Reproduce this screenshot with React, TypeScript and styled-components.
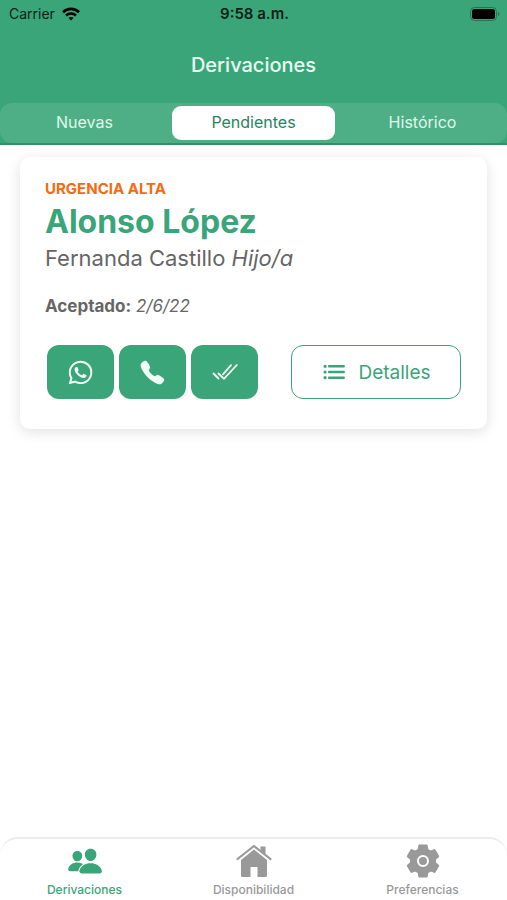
import React from 'react';
import styled, { createGlobalStyle } from 'styled-components';
import { IoLogoWhatsapp, IoCall, IoPeople, IoList } from 'react-icons/io5';

const green = '#3aa578';

const GlobalStyle = createGlobalStyle`
  * { box-sizing: border-box; }
  body { margin: 0; background: #fff; font-family: Inter, "Liberation Sans", sans-serif; }
  button { font: inherit; border: 0; margin: 0; cursor: pointer; }
`;

const Screen = styled.div`
  display: flex;
  flex-direction: column;
  min-height: 100vh;
`;

const Header = styled.header`
  background: ${green};
  border-bottom: 2px solid #359069;
`;

const StatusBar = styled.div`
  display: grid;
  grid-template-columns: 1fr auto 1fr;
  align-items: center;
  height: 27px;
  padding: 0 7px 0 9px;
  font-size: 14px;
  color: #0b1f17;
`;

const Carrier = styled.div`
  display: flex;
  align-items: center;
  gap: 7px;
`;

const Clock = styled.time`
  font-weight: 600;
  font-size: 15px;
`;

const Battery = styled.svg`
  justify-self: end;
`;

const Title = styled.h1`
  margin: 0;
  padding: 24px 0;
  font-size: 20px;
  line-height: 28px;
  font-weight: 500;
  text-align: center;
  color: #eafff4;
`;

const Tabs = styled.div`
  display: grid;
  grid-template-columns: repeat(3, 1fr);
  padding: 3px 0;
  border-radius: 12px;
  background: #4eaf86;
`;

const Tab = styled.button<{ $active?: boolean }>`
  height: 34px;
  margin: 0 3px;
  padding: 0 0 2px;
  border-radius: 9px;
  background: ${p => (p.$active ? '#fff' : 'transparent')};
  color: ${p => (p.$active ? '#26845d' : '#e0f7ec')};
  font-size: 16px;
`;

const Main = styled.main`
  flex: 1;
  padding: 12px 20px;
`;

const Card = styled.article`
  padding: 24px 25px 30px;
  border-radius: 10px;
  background: #fff;
  box-shadow: 0 3px 14px rgba(0, 0, 0, 0.12);
  color: #666;
`;

const Urgency = styled.p`
  margin: 0;
  font-size: 15px;
  line-height: 16px;
  font-weight: 700;
  color: #f9690e;
`;

const Name = styled.h2`
  margin: 4px 0 0;
  font-size: 32px;
  line-height: 42px;
  font-weight: 700;
  color: ${green};
`;

const Relative = styled.p`
  margin: 0;
  font-size: 22px;
  line-height: 30px;
`;

const Accepted = styled.p`
  margin: 22px 0 28px;
  font-size: 17px;
  line-height: 22px;
`;

const Actions = styled.div`
  display: flex;
  align-items: center;
  justify-content: space-between;
  padding: 0 1px 0 2px;
`;

const Quick = styled.div`
  display: flex;
  gap: 5px;
`;

const IconButton = styled.button`
  display: grid;
  place-items: center;
  width: 67px;
  height: 54px;
  padding: 0;
  border-radius: 12px;
  background: ${green};
  color: #f0fff8;
`;

const DetailsButton = styled.button`
  display: flex;
  align-items: center;
  justify-content: center;
  gap: 11px;
  width: 170px;
  height: 54px;
  && { border: 1px solid ${green}; }
  border-radius: 12px;
  background: #fff;
  color: ${green};
  font-size: 19px;
`;

const BottomNav = styled.nav`
  display: grid;
  grid-template-columns: repeat(3, 1fr);
  height: 63px;
  border-top: 2px solid #ececec;
  border-radius: 18px 18px 0 0;
`;

const NavLink = styled.a<{ $active?: boolean }>`
  display: flex;
  flex-direction: column;
  align-items: center;
  gap: 3px;
  padding-top: 4px;
  color: ${p => (p.$active ? green : '#999')};
  font-size: 12px;
  font-weight: 500;
  line-height: 16px;
  text-decoration: none;
`;

const DoubleCheck = () => (
  <svg width="26" height="18" viewBox="0 0 26 18" fill="none" stroke="currentColor" strokeWidth="1.8" strokeLinecap="round" aria-hidden="true">
    <path d="M1.5 10.5 6.5 15.5M6.5 10.5 12 15.8 24.8 2M11 11.3 19 2.2" />
  </svg>
);

const House = () => (
  <svg width="36" height="36" viewBox="0 0 36 36" fill="currentColor" aria-hidden="true">
    <path d="M1.5 16 18 3 34.500 16" fill="none" stroke="currentColor" strokeWidth="2.2" strokeLinecap="round" strokeLinejoin="round" />
    <path d="M24.5 3.5h5v9l-5-3.8z" />
    <path d="M18 6.500 31 17v15.5q0 1.500-1.500 1.500H21.500V24h-7v10H6.500Q5 34 5 32.500V17z" />
  </svg>
);

const Gear = () => (
  <svg width="36" height="36" viewBox="0 0 36 36" fill="currentColor" aria-hidden="true">
    <circle cx="18" cy="18" r="13" />
    {[0, 60, 120].map(a => (
      <path key={a} transform={`rotate(${a} 18 18)`} d="M14.500 1.500h7q1 0 1.200 1L23.700 9v18l-1 6.500q-.2 1-1.200 1h-7q-1 0-1.200-1l-1-6.500V9l1-6.500q.2-1 1.200-1z" />
    ))}
    <circle cx="18" cy="18" r="5" fill="none" stroke="#fff" strokeWidth="2" />
  </svg>
);

export default function App() {
  return (
    <Screen>
      <GlobalStyle />
      <Header>
        <StatusBar>
          <Carrier>
            Carrier
            <svg width="18" height="14" viewBox="0 0 18 14" fill="none" stroke="#000" strokeWidth="2.6" aria-hidden="true">
              <path d="M1 5.200C5.500.8 12.500.8 17 5.200" />
              <path d="M4 8.500c2.800-2.700 7.200-2.700 10 0" />
              <path d="M6.500 10.800 9 13.500l2.500-2.700c-1.400-1.200-3.600-1.200-5 0z" fill="#000" stroke="none" />
            </svg>
          </Carrier>
          <Clock>9:58 a.m.</Clock>
          <Battery width="30" height="14" viewBox="0 0 30 14" aria-label="Batería">
            <rect x="0.5" y="0.5" width="26" height="13" rx="4" fill="none" stroke="#277254" />
            <rect x="2" y="2" width="23" height="10" rx="2.5" fill="#000" />
            <path d="M28 5c2 .8 2 3.200 0 4z" fill="#277254" />
          </Battery>
        </StatusBar>
        <Title>Derivaciones</Title>
        <Tabs role="tablist">
          <Tab role="tab">Nuevas</Tab>
          <Tab role="tab" $active aria-selected>Pendientes</Tab>
          <Tab role="tab">Histórico</Tab>
        </Tabs>
      </Header>
      <Main>
        <Card>
          <Urgency>URGENCIA ALTA</Urgency>
          <Name>Alonso López</Name>
          <Relative>Fernanda Castillo <em>Hijo/a</em></Relative>
          <Accepted><strong>Aceptado:</strong> <em>2/6/22</em></Accepted>
          <Actions>
            <Quick>
              <IconButton aria-label="WhatsApp"><IoLogoWhatsapp size={27} /></IconButton>
              <IconButton aria-label="Llamar"><IoCall size={27} /></IconButton>
              <IconButton aria-label="Completar"><DoubleCheck /></IconButton>
            </Quick>
            <DetailsButton><IoList size={26} />Detalles</DetailsButton>
          </Actions>
        </Card>
      </Main>
      <BottomNav>
        <NavLink href="#derivaciones" $active><IoPeople size={36} />Derivaciones</NavLink>
        <NavLink href="#disponibilidad"><House />Disponibilidad</NavLink>
        <NavLink href="#preferencias"><Gear />Preferencias</NavLink>
      </BottomNav>
    </Screen>
  );
}
